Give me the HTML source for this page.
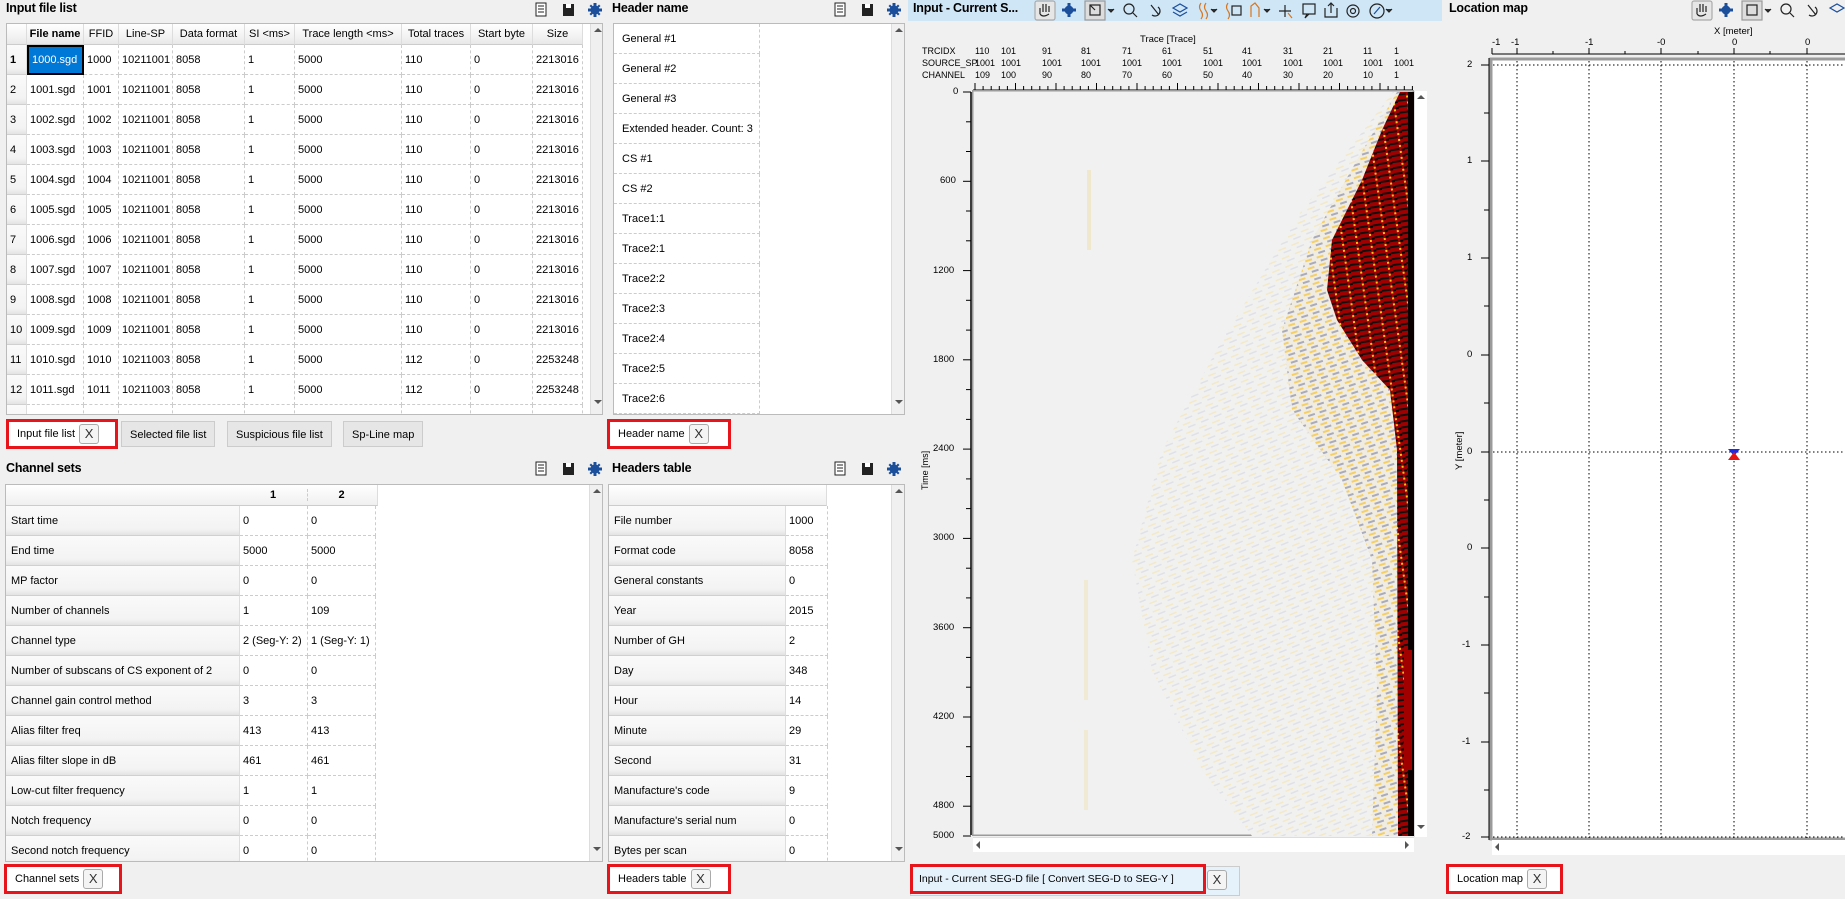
<!DOCTYPE html>
<html><head><meta charset="utf-8">
<style>
*{box-sizing:border-box;margin:0;padding:0}
body{width:1845px;height:899px;background:#f0f0f0;font-family:"Liberation Sans",sans-serif;font-size:11px;color:#000;position:relative;overflow:hidden}
.a{position:absolute}
.title{position:absolute;font-weight:bold;font-size:12.5px;letter-spacing:-0.2px}
.tbl{position:absolute;background:#fff;border:1px solid #bbb;overflow:hidden}
.c{position:absolute;white-space:nowrap;line-height:30px;padding-left:3px;border-right:1px dashed #ccc;border-bottom:1px dashed #ccc;height:30px;overflow:hidden}
.h{position:absolute;white-space:nowrap;text-align:center;background:linear-gradient(#fff,#f3f3f3 60%,#e8e8e8);border-right:1px solid #ddd;border-bottom:1px solid #ccc}
.lab{position:absolute;white-space:nowrap;line-height:30px;padding-left:5px;background:linear-gradient(#fafafa,#f3f3f3 80%,#e3e3e3);border-right:1px solid #ddd;border-bottom:1px solid #d0d0d0;height:30px}
.sb{position:absolute;background:#f0f0f0;border-left:1px solid #ddd}
.tab{position:absolute;height:26px;line-height:26px;padding:0 8px;background:#e6e6e6;border:1px solid #ccc;font-size:11px}
.tabs{position:absolute;height:30px;line-height:24px;padding-left:8px;background:#fff;border:3px solid #e8141c;font-size:11px;white-space:nowrap}
.x{display:inline-block;width:20px;height:20px;line-height:18px;text-align:center;border:1px solid #aaa;border-radius:3px;background:#f4f4f4;margin-left:4px;vertical-align:middle;font-size:13px;color:#333}
.tk{position:absolute;font-size:9.5px;white-space:nowrap}
</style></head><body>

<!-- ================= INPUT FILE LIST ================= -->
<div class="title" style="left:6px;top:1px">Input file list</div>
<svg class="a" style="left:533px;top:1px" width="75" height="18">
<rect x="3" y="2" width="10" height="13" fill="#fff" stroke="#222"/><path d="M5 5h6M5 8h6M5 11h6" stroke="#222"/>
<rect x="30" y="3" width="11" height="12" fill="#222"/><rect x="33" y="3" width="5" height="4" fill="#fff"/>
<g transform="translate(62,9)" fill="#1b4f9c"><circle r="4.5"/><circle r="1.8" fill="#fff"/><path d="M-1.5 -7h3v14h-3zM-7 -1.5h14v3h-14z"/><path d="M-5.5 -4l1.5-1.5 9.5 9.5-1.5 1.5zM4 -5.5l1.5 1.5-9.5 9.5-1.5-1.5z"/></g>
</svg>
<div class="tbl" style="left:6px;top:23px;width:597px;height:392px">
<div class="h" style="left:0;top:0;width:20px;height:21px"></div>
<div class="h" style="left:20px;top:0;width:57px;height:21px;line-height:21px;font-weight:bold">File name</div>
<div class="h" style="left:77px;top:0;width:35px;height:21px;line-height:21px">FFID</div>
<div class="h" style="left:112px;top:0;width:54px;height:21px;line-height:21px">Line-SP</div>
<div class="h" style="left:166px;top:0;width:72px;height:21px;line-height:21px">Data format</div>
<div class="h" style="left:238px;top:0;width:50px;height:21px;line-height:21px">SI &lt;ms&gt;</div>
<div class="h" style="left:288px;top:0;width:107px;height:21px;line-height:21px">Trace length &lt;ms&gt;</div>
<div class="h" style="left:395px;top:0;width:69px;height:21px;line-height:21px">Total traces</div>
<div class="h" style="left:464px;top:0;width:62px;height:21px;line-height:21px">Start byte</div>
<div class="h" style="left:526px;top:0;width:50px;height:21px;line-height:21px">Size</div>
<div id="ifl"></div>
<div class="sb" style="left:583px;top:0;width:14px;height:392px"><div style="margin:4px 3px;width:0;height:0;border:4px solid transparent;border-bottom-color:#555;border-top:0"></div><div class="a" style="left:3px;top:376px;width:0;height:0;border:4px solid transparent;border-top-color:#555;border-bottom:0"></div></div>
</div>

<!-- ================= HEADER NAME ================= -->
<div class="title" style="left:612px;top:1px">Header name</div>
<svg class="a" style="left:832px;top:1px" width="75" height="18">
<rect x="3" y="2" width="10" height="13" fill="#fff" stroke="#222"/><path d="M5 5h6M5 8h6M5 11h6" stroke="#222"/>
<rect x="30" y="3" width="11" height="12" fill="#222"/><rect x="33" y="3" width="5" height="4" fill="#fff"/>
<g transform="translate(62,9)" fill="#1b4f9c"><circle r="4.5"/><circle r="1.8" fill="#fff"/><path d="M-1.5 -7h3v14h-3zM-7 -1.5h14v3h-14z"/><path d="M-5.5 -4l1.5-1.5 9.5 9.5-1.5 1.5zM4 -5.5l1.5 1.5-9.5 9.5-1.5-1.5z"/></g>
</svg>
<div class="tbl" style="left:613px;top:23px;width:292px;height:392px" id="hn">
<div class="sb" style="left:277px;top:0;width:14px;height:392px"><div style="margin:4px 3px;width:0;height:0;border:4px solid transparent;border-bottom-color:#555;border-top:0"></div><div class="a" style="left:3px;top:376px;width:0;height:0;border:4px solid transparent;border-top-color:#555;border-bottom:0"></div></div>
</div>

<!-- tabs top -->
<div class="tabs" style="left:6px;top:419px;width:112px">Input file list<span class="x">X</span></div>
<div class="tab" style="left:121px;top:421px">Selected file list</div>
<div class="tab" style="left:227px;top:421px">Suspicious file list</div>
<div class="tab" style="left:343px;top:421px">Sp-Line map</div>
<div class="tabs" style="left:607px;top:419px;width:124px">Header name<span class="x">X</span></div>

<!-- ================= CHANNEL SETS ================= -->
<div class="title" style="left:6px;top:461px">Channel sets</div>
<svg class="a" style="left:533px;top:460px" width="75" height="18">
<rect x="3" y="2" width="10" height="13" fill="#fff" stroke="#222"/><path d="M5 5h6M5 8h6M5 11h6" stroke="#222"/>
<rect x="30" y="3" width="11" height="12" fill="#222"/><rect x="33" y="3" width="5" height="4" fill="#fff"/>
<g transform="translate(62,9)" fill="#1b4f9c"><circle r="4.5"/><circle r="1.8" fill="#fff"/><path d="M-1.5 -7h3v14h-3zM-7 -1.5h14v3h-14z"/><path d="M-5.5 -4l1.5-1.5 9.5 9.5-1.5 1.5zM4 -5.5l1.5 1.5-9.5 9.5-1.5-1.5z"/></g>
</svg>
<div class="tbl" style="left:5px;top:484px;width:598px;height:378px" id="cs">
<div class="h" style="left:0;top:0;width:372px;height:21px;background:linear-gradient(#fff,#f0f0f0)"></div>
<div class="a" style="left:233px;top:4px;width:68px;text-align:center;font-weight:bold">1</div>
<div class="a" style="left:301px;top:4px;width:68px;text-align:center;font-weight:bold;border-left:1px dashed #ccc">2</div>
<div class="sb" style="left:583px;top:0;width:14px;height:378px"><div style="margin:4px 3px;width:0;height:0;border:4px solid transparent;border-bottom-color:#555;border-top:0"></div><div class="a" style="left:3px;top:362px;width:0;height:0;border:4px solid transparent;border-top-color:#555;border-bottom:0"></div></div>
</div>

<!-- ================= HEADERS TABLE ================= -->
<div class="title" style="left:612px;top:461px">Headers table</div>
<svg class="a" style="left:832px;top:460px" width="75" height="18">
<rect x="3" y="2" width="10" height="13" fill="#fff" stroke="#222"/><path d="M5 5h6M5 8h6M5 11h6" stroke="#222"/>
<rect x="30" y="3" width="11" height="12" fill="#222"/><rect x="33" y="3" width="5" height="4" fill="#fff"/>
<g transform="translate(62,9)" fill="#1b4f9c"><circle r="4.5"/><circle r="1.8" fill="#fff"/><path d="M-1.5 -7h3v14h-3zM-7 -1.5h14v3h-14z"/><path d="M-5.5 -4l1.5-1.5 9.5 9.5-1.5 1.5zM4 -5.5l1.5 1.5-9.5 9.5-1.5-1.5z"/></g>
</svg>
<div class="tbl" style="left:608px;top:484px;width:297px;height:378px" id="ht">
<div class="h" style="left:0;top:0;width:218px;height:21px;background:linear-gradient(#fff,#f0f0f0)"></div>
<div class="sb" style="left:282px;top:0;width:14px;height:378px"><div style="margin:4px 3px;width:0;height:0;border:4px solid transparent;border-bottom-color:#555;border-top:0"></div><div class="a" style="left:3px;top:362px;width:0;height:0;border:4px solid transparent;border-top-color:#555;border-bottom:0"></div></div>
</div>

<div class="tabs" style="left:4px;top:864px;width:118px">Channel sets<span class="x">X</span></div>
<div class="tabs" style="left:607px;top:864px;width:124px">Headers table<span class="x">X</span></div>

<!-- ================= SEISMIC ================= -->
<div class="a" style="left:908px;top:0;width:534px;height:21px;background:#cfe6f7"></div>
<div class="title" style="left:913px;top:1px">Input - Current S...</div>
<svg class="a" style="left:1033px;top:0" width="410" height="21" fill="none" stroke="#222" stroke-width="1.2">
<rect x="2" y="1" width="20" height="19" rx="2" fill="#e6e6e6" stroke="#aaa"/><path d="M7 14v-6M10 12v-8M13 12v-8M16 12v-6M7 14q3 4 9 0"/>
<g transform="translate(36,10)" fill="#1b4f9c" stroke="none"><circle r="4.5"/><circle r="1.8" fill="#fff"/><path d="M-1.5 -7h3v14h-3zM-7 -1.5h14v3h-14z"/></g>
<rect x="52" y="1" width="20" height="19" fill="#ddd" stroke="#999"/><rect x="57" y="5" width="10" height="10"/><path d="M57 5l5 5" /><path d="M75 9l3 3 3-3" fill="#333"/>
<circle cx="96" cy="9" r="5"/><path d="M100 13l4 4"/>
<path d="M118 5l8 10M119 15a4 4 0 1 0 6-8"/>
<path d="M140 8l7-4 7 4-7 4zM140 12l7 4 7-4" stroke="#1b4f9c"/>
<path d="M168 3q-3 4 0 8t0 8M173 3q-3 4 0 8t0 8" stroke="#d9751c"/><path d="M178 9l3 3 3-3" fill="#333"/>
<path d="M195 3q-3 4 0 8t0 8" stroke="#d9751c"/><rect x="199" y="6" width="9" height="9"/>
<path d="M218 17v-11l4-3 4 5v9" stroke="#d9751c"/><path d="M231 9l3 3 3-3" fill="#333"/>
<path d="M246 11h12M252 5v12"/><path d="M255 13l4 5" stroke="#d9751c"/>
<rect x="270" y="4" width="12" height="10"/><path d="M274 14l-2 4 4-4"/>
<path d="M292 8v9h12v-9M298 13v-10M295 6l3-3 3 3"/>
<circle cx="320" cy="11" r="6"/><circle cx="320" cy="11" r="2.5"/>
<circle cx="344" cy="11" r="7"/><path d="M341 14l6-7" stroke="#1b4f9c"/><path d="M353 9l3 3 3-3" fill="#333"/>
</svg>

<div class="tk" style="left:1140px;top:34px">Trace [Trace]</div>
<div class="tk" style="left:922px;top:46px;font-size:9px">TRCIDX</div>
<div class="tk" style="left:922px;top:58px;font-size:9px">SOURCE_SP</div>
<div class="tk" style="left:922px;top:70px;font-size:9px">CHANNEL</div>
<div id="trl"></div>
<svg class="a" style="left:908px;top:80px" width="534" height="780">
<path d="M65 10H505" stroke="#000"/>
<g id="tt" stroke="#000"></g>
<path d="M63 12V755" stroke="#000" stroke-width="1.5"/>
<g id="yt" stroke="#000"></g>
</svg>
<div id="ylab"></div>
<svg class="a" style="left:972px;top:90px" width="442" height="746" viewBox="0 0 442 746">
<defs>
<pattern id="dk" width="14" height="6" patternUnits="userSpaceOnUse" patternTransform="rotate(-8)">
<rect width="14" height="6" fill="#a00000"/><rect y="3" width="9" height="2" fill="#111"/><rect x="9" y="0" width="2" height="2" fill="#f6c319"/><rect x="11" y="4" width="3" height="2" fill="#000"/>
</pattern>
<pattern id="md" width="12" height="8" patternUnits="userSpaceOnUse" patternTransform="rotate(-18)">
<rect width="12" height="8" fill="#f0ece2"/><rect y="1" width="7" height="2" fill="#f5cf66"/><rect x="3" y="5" width="7" height="2" fill="#a8abbb"/>
</pattern>
<pattern id="lt" width="14" height="9" patternUnits="userSpaceOnUse" patternTransform="rotate(-22)">
<rect width="14" height="9" fill="#f1f1f0"/><rect y="2" width="8" height="1.5" fill="#f3e8c8"/><rect x="4" y="6" width="8" height="1.5" fill="#e0e1e8"/>
</pattern>
</defs>
<rect x="0" y="0" width="442" height="746" fill="#f1f1f1" stroke="#9b9b9b" stroke-width="3"/>
<polygon points="421,2 330,120 250,250 190,360 160,470 180,580 230,680 280,746 442,746 442,2" fill="url(#lt)"/>
<polygon points="425,2 385,70 340,150 310,240 320,320 370,390 400,470 405,600 400,746 442,746 442,2" fill="url(#md)"/>
<polygon points="428,2 410,40 390,90 360,150 355,200 365,230 390,270 418,300 425,360 426,746 442,746 442,2" fill="url(#dk)"/>
<rect x="436" y="2" width="6" height="744" fill="#0a0000"/>
<rect x="432" y="560" width="8" height="120" fill="#a00000"/>
<rect x="115" y="80" width="4" height="80" fill="#efdfa8" opacity=".5"/>
<rect x="112" y="490" width="4" height="120" fill="#efdfa8" opacity=".4"/>
<rect x="112" y="640" width="4" height="80" fill="#efdfa8" opacity=".4"/>
</svg>
<div class="sb" style="left:1414px;top:91px;width:13px;height:746px;background:#fff"><div style="margin:4px 2px;width:0;height:0;border:4px solid transparent;border-bottom-color:#555;border-top:0"></div><div class="a" style="left:2px;top:734px;width:0;height:0;border:4px solid transparent;border-top-color:#555;border-bottom:0"></div></div>
<div class="a" style="left:973px;top:837px;width:441px;height:15px;background:#fff;border-top:1px solid #ddd"><div class="a" style="left:3px;top:3px;width:0;height:0;border:4px solid transparent;border-right-color:#555;border-left:0"></div><div class="a" style="left:432px;top:3px;width:0;height:0;border:4px solid transparent;border-left-color:#555;border-right:0"></div></div>
<div class="a" style="left:910px;top:866px;width:330px;height:30px;background:#e6f2fb;border:1px solid #ccc"></div>
<div class="tabs" style="left:910px;top:864px;width:296px;font-size:10.5px;padding-left:6px;background:#e6f2fb">Input - Current SEG-D file [ Convert SEG-D to SEG-Y ]</div>
<span class="x a" style="left:1207px;top:870px;margin:0">X</span>

<!-- ================= LOCATION MAP ================= -->
<div class="title" style="left:1449px;top:1px">Location map</div>
<svg class="a" style="left:1690px;top:0" width="160" height="21" fill="none" stroke="#222" stroke-width="1.2">
<rect x="2" y="1" width="20" height="19" rx="2" fill="#e6e6e6" stroke="#aaa"/><path d="M7 14v-6M10 12v-8M13 12v-8M16 12v-6M7 14q3 4 9 0"/>
<g transform="translate(36,10)" fill="#1b4f9c" stroke="none"><circle r="4.5"/><circle r="1.8" fill="#fff"/><path d="M-1.5 -7h3v14h-3zM-7 -1.5h14v3h-14z"/></g>
<rect x="52" y="1" width="20" height="19" fill="#ddd" stroke="#999"/><rect x="57" y="5" width="10" height="10"/><path d="M75 9l3 3 3-3" fill="#333"/>
<circle cx="96" cy="9" r="5"/><path d="M100 13l4 4"/>
<path d="M118 5l8 10M119 15a4 4 0 1 0 6-8"/>
<path d="M140 8l7-4 7 4-7 4z" stroke="#1b4f9c"/>
</svg>
<div class="tk" style="left:1714px;top:26px">X [meter]</div>
<div class="tk" style="left:1492px;top:37px">-1</div><div class="tk" style="left:1511px;top:37px">-1</div>
<div class="tk" style="left:1585px;top:37px">-1</div><div class="tk" style="left:1657px;top:37px">-0</div>
<div class="tk" style="left:1732px;top:37px">0</div><div class="tk" style="left:1805px;top:37px">0</div>
<div class="tk" style="left:1454px;top:470px;transform:rotate(-90deg);transform-origin:left top">Y [meter]</div>
<div id="my"></div>
<svg class="a" style="left:1470px;top:40px" width="375" height="810">
<path d="M22 14H375M22 8v6M47 8v6M119 8v6M191 8v6M264 8v6M337 8v6M83 11v3M155 11v3M228 11v3M300 11v3" stroke="#000"/>
<path d="M19 18V800" stroke="#000"/>
<g id="myt" stroke="#000"></g>
<rect x="21" y="19" width="360" height="780" fill="#fff" stroke="#9b9b9b" stroke-width="3"/>
<g stroke="#000" stroke-dasharray="1.5 2.5"><path d="M47 21V798M119 21V798M191 21V798M264 21V798M337 21V798M23 25H375M23 412H375M23 797H375"/></g>
<polygon points="258,409 270,409 264,416" fill="#1d2be0"/><polygon points="258,420 270,420 264,412" fill="#e41414"/>
</svg>
<div class="a" style="left:1492px;top:840px;width:353px;height:15px;background:#fff"><div class="a" style="left:3px;top:3px;width:0;height:0;border:4px solid transparent;border-right-color:#555;border-left:0"></div></div>
<div class="tabs" style="left:1446px;top:864px;width:117px">Location map<span class="x">X</span></div>

<script>
function H(id,s){document.getElementById(id).insertAdjacentHTML('beforeend',s)}
var cols=[[20,57],[77,35],[112,54],[166,72],[238,50],[288,107],[395,69],[464,62],[526,50]];
var s='';
for(var i=0;i<13;i++){
 var n=1000+i, lsp=i<10?'10211001':'10211003', tt=i<10?'110':'112', sz=i<10?'2213016':'2253248';
 var v=[n+'.sgd',''+n,lsp,'8058','1','5000',tt,'0',sz];
 var y=21+i*30;
 s+='<div class="lab" style="left:0;top:'+y+'px;width:20px;padding-left:3px;'+(i==0?'font-weight:bold;':'')+'">'+(i+1)+'</div>';
 for(var j=0;j<9;j++){
  var st='left:'+cols[j][0]+'px;top:'+y+'px;width:'+cols[j][1]+'px;';
  if(i==0&&j==0) st+='background:#0078d7;color:#fff;border:2px solid #000;line-height:26px;';
  s+='<div class="c" style="'+st+'">'+v[j]+'</div>';
 }
}
H('ifl',s);
var hn=['General #1','General #2','General #3','Extended header. Count: 3','CS #1','CS #2','Trace1:1','Trace2:1','Trace2:2','Trace2:3','Trace2:4','Trace2:5','Trace2:6'];
s='';hn.forEach(function(t,i){var y=i*30;s+='<div class="c" style="left:0;top:'+y+'px;width:146px;padding-left:8px">'+t+'</div><div class="c" style="left:146px;top:'+y+'px;width:131px;border-right:0;border-bottom:0"></div>';});
H('hn',s);
var cs=[['Start time','0','0'],['End time','5000','5000'],['MP factor','0','0'],['Number of channels','1','109'],['Channel type','2 (Seg-Y: 2)','1 (Seg-Y: 1)'],['Number of subscans of CS exponent of 2','0','0'],['Channel gain control method','3','3'],['Alias filter freq','413','413'],['Alias filter slope in dB','461','461'],['Low-cut filter frequency','1','1'],['Notch frequency','0','0'],['Second notch frequency','0','0']];
s='';cs.forEach(function(r,i){var y=21+i*30;s+='<div class="lab" style="left:0;top:'+y+'px;width:234px">'+r[0]+'</div><div class="c" style="left:234px;top:'+y+'px;width:68px">'+r[1]+'</div><div class="c" style="left:302px;top:'+y+'px;width:68px">'+r[2]+'</div>';});
H('cs',s);
var ht=[['File number','1000'],['Format code','8058'],['General constants','0'],['Year','2015'],['Number of GH','2'],['Day','348'],['Hour','14'],['Minute','29'],['Second','31'],["Manufacture's code",'9'],["Manufacture's serial num",'0'],['Bytes per scan','0']];
s='';ht.forEach(function(r,i){var y=21+i*30;s+='<div class="lab" style="left:0;top:'+y+'px;width:177px">'+r[0]+'</div><div class="c" style="left:177px;top:'+y+'px;width:42px">'+r[1]+'</div>';});
H('ht',s);
var tx=[975,1001,1042,1081,1122,1162,1203,1242,1283,1323,1363,1394];
var tr=['110','101','91','81','71','61','51','41','31','21','11','1'];
var ch=['109','100','90','80','70','60','50','40','30','20','10','1'];
s='';tx.forEach(function(x,i){s+='<div class="tk" style="font-size:9px;left:'+x+'px;top:46px">'+tr[i]+'</div><div class="tk" style="font-size:9px;left:'+x+'px;top:58px">1001</div><div class="tk" style="font-size:9px;left:'+x+'px;top:70px">'+ch[i]+'</div>';});
H('trl',s);
s='';for(var x=67;x<505;x+=8.1){var big=Math.round((x-67)/8.1)%5==0;s+='<path d="M'+x.toFixed(1)+' '+(big?3:6)+'V10"/>';}
document.getElementById('tt').innerHTML=s;
s='';var ly='';for(var t=0;t<=5000;t+=200){var y=12+t*744/5000;var big=t%600==0||t==5000;s+='<path d="M'+(big?55:58)+' '+y.toFixed(1)+'H63"/>';if(big)ly+='<div class="tk" style="left:'+(t>=1000?933:t>0?940:953)+'px;top:'+(80+y-6)+'px">'+t+'</div>';}
document.getElementById('yt').innerHTML=s;H('ylab',ly);
H('ylab','<div class="tk" style="left:920px;top:490px;transform:rotate(-90deg);transform-origin:left top;font-size:9px">Time [ms]</div>');
s='';var ml='';
[25,73,121,170,218,266,315,363,412,460,508,557,605,653,702,750,797].forEach(function(y,i){s+='<path d="M'+(i%2?14:11)+' '+y+'H19"/>';});
document.getElementById('myt').innerHTML=s;
[[25,'2'],[121,'1'],[218,'1'],[315,'0'],[412,'0'],[508,'0'],[605,'-1'],[702,'-1'],[797,'-2']].forEach(function(p){ml+='<div class="tk" style="left:'+(p[1].length>1?1462:1467)+'px;top:'+(40+p[0]-6)+'px">'+p[1]+'</div>';});
H('my',ml);
</script>
</body></html>
